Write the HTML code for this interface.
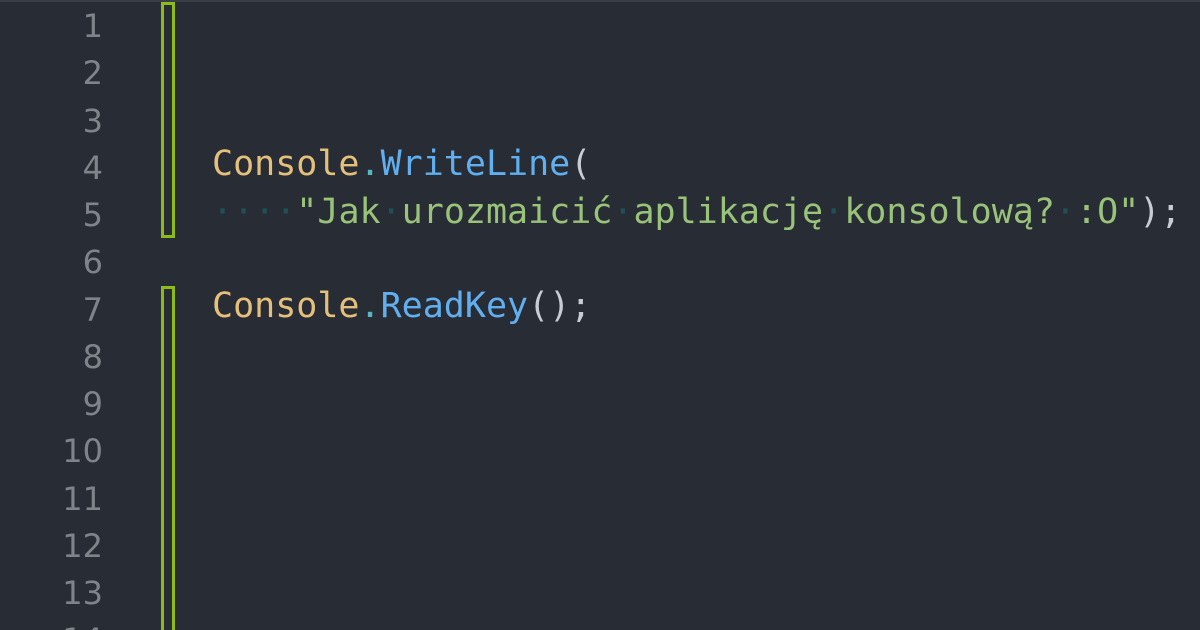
<!DOCTYPE html>
<html><head><meta charset="utf-8"><style>
html,body{margin:0;padding:0;width:1200px;height:630px;overflow:hidden;}
body{background:#282c34;font-family:"DejaVu Sans Mono","Liberation Mono",monospace;}
.wrap{position:relative;width:1200px;height:630px;overflow:hidden;}
.top{position:absolute;left:0;top:0;width:1200px;height:2px;background:#3a3f47;}
.ln{position:absolute;left:0;width:103px;text-align:right;color:#7f848b;font-size:32px;line-height:47.25px;font-family:"DejaVu Sans","Liberation Sans",sans-serif;}
.code{position:absolute;left:212px;font-size:35px;line-height:47.25px;white-space:pre;}
.box{position:absolute;left:161px;width:8px;border:3px solid #8cbb1a;box-sizing:content-box;}
.c{color:#e5c07b}.d{color:#56b6c2}.m{color:#61afef}.p{color:#c8ccd4}.s{color:#98c379}.w{color:#1f5058}
</style></head><body><div class="wrap">
<div class="top"></div>
<div class="box" style="top:2px;height:230px"></div>
<div class="box" style="top:286px;height:341px;border-bottom:none"></div>
<div class="ln" style="top:3px">1</div>
<div class="ln" style="top:50px">2</div>
<div class="ln" style="top:98px">3</div>
<div class="ln" style="top:145px">4</div>
<div class="ln" style="top:192px">5</div>
<div class="ln" style="top:239px">6</div>
<div class="ln" style="top:287px">7</div>
<div class="ln" style="top:334px">8</div>
<div class="ln" style="top:381px">9</div>
<div class="ln" style="top:428px">10</div>
<div class="ln" style="top:476px">11</div>
<div class="ln" style="top:523px">12</div>
<div class="ln" style="top:570px">13</div>
<div class="ln" style="top:617px;height:13px;overflow:hidden">14</div>
<div class="code" style="top:141px"><span class="c">Console</span><span class="d">.</span><span class="m">WriteLine</span><span class="p">(</span></div>
<div class="code" style="top:189px"><span class="w">····</span><span class="s">"Jak</span><span class="w">·</span><span class="s">urozmaicić</span><span class="w">·</span><span class="s">aplikację</span><span class="w">·</span><span class="s">konsolową?</span><span class="w">·</span><span class="s">:O"</span><span class="p">);</span></div>
<div class="code" style="top:283px"><span class="c">Console</span><span class="d">.</span><span class="m">ReadKey</span><span class="p">();</span></div>
</div></body></html>
